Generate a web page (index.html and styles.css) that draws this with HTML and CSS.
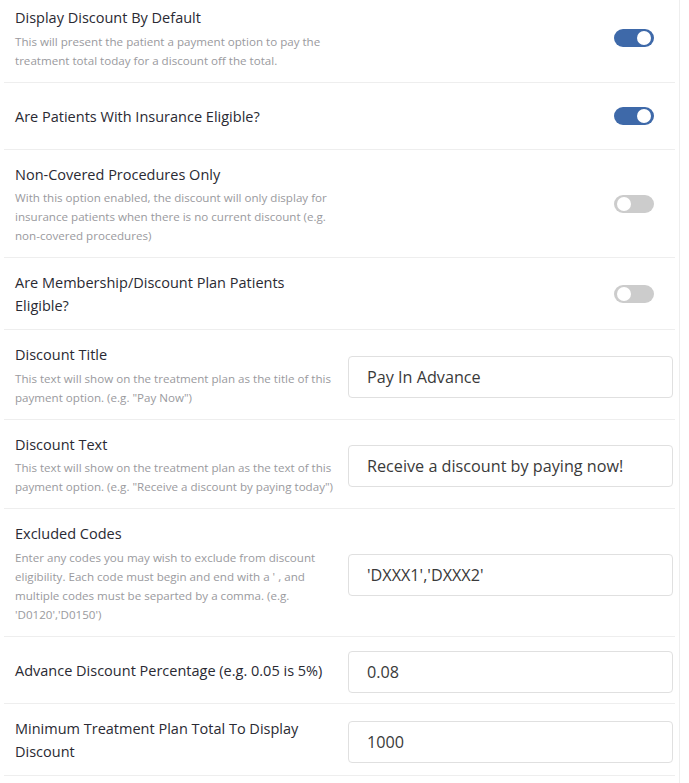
FILE: index.html
```html
<!DOCTYPE html>
<html>
<head>
<meta charset="utf-8">
<link rel="stylesheet" href="styles.css">
</head>
<body>
<div class="page">
  <div class="list">
    <div class="row">
      <div class="label">
        <div class="title">Display Discount By Default</div>
        <div class="desc">This will present the patient a payment option to pay the<br>treatment total today for a discount off the total.</div>
      </div>
      <span class="toggle on"><span class="knob"></span></span>
    </div>
    <div class="row">
      <div class="label">
        <div class="title">Are Patients With Insurance Eligible?</div>
      </div>
      <span class="toggle on"><span class="knob"></span></span>
    </div>
    <div class="row">
      <div class="label">
        <div class="title">Non-Covered Procedures Only</div>
        <div class="desc">With this option enabled, the discount will only display for<br>insurance patients when there is no current discount (e.g.<br>non-covered procedures)</div>
      </div>
      <span class="toggle"><span class="knob"></span></span>
    </div>
    <div class="row">
      <div class="label">
        <div class="title">Are Membership/Discount Plan Patients<br>Eligible?</div>
      </div>
      <span class="toggle"><span class="knob"></span></span>
    </div>
    <div class="row">
      <div class="label">
        <div class="title">Discount Title</div>
        <div class="desc">This text will show on the treatment plan as the title of this<br>payment option. (e.g. "Pay Now")</div>
      </div>
      <div class="field">Pay In Advance</div>
    </div>
    <div class="row">
      <div class="label">
        <div class="title">Discount Text</div>
        <div class="desc">This text will show on the treatment plan as the text of this<br>payment option. (e.g. "Receive a discount by paying today")</div>
      </div>
      <div class="field">Receive a discount by paying now!</div>
    </div>
    <div class="row">
      <div class="label">
        <div class="title">Excluded Codes</div>
        <div class="desc">Enter any codes you may wish to exclude from discount<br>eligibility. Each code must begin and end with a ' , and<br>multiple codes must be separted by a comma. (e.g.<br>'D0120','D0150')</div>
      </div>
      <div class="field">'DXXX1','DXXX2'</div>
    </div>
    <div class="row">
      <div class="label">
        <div class="title">Advance Discount Percentage (e.g. 0.05 is 5%)</div>
      </div>
      <div class="field">0.08</div>
    </div>
    <div class="row">
      <div class="label">
        <div class="title">Minimum Treatment Plan Total To Display<br>Discount</div>
      </div>
      <div class="field">1000</div>
    </div>
  </div>
</div>
</body>
</html>
```

FILE: styles.css
```css
html, body {
  margin: 0;
  padding: 0;
  background: #fff;
}
body {
  font-family: "Open Sans", "Noto Sans", sans-serif;
  color: #333;
}
.page {
  width: 679px;
  min-height: 783px;
  border-right: 1px solid #eeeeee;
}
.list {
  margin: 0 4px;
}
.row {
  display: flex;
  align-items: center;
  box-sizing: border-box;
  min-height: 67px;
  padding: 13px 0 12px 11px;
  border-bottom: 1px solid #eeeeee;
}
.row:first-child {
  padding-top: 6px;
}
.label {
  flex: 1 1 auto;
  min-width: 0;
}
.title {
  font-size: 14.5px;
  line-height: 23px;
  color: #2a2a33;
}
.desc {
  margin-top: 2.5px;
  font-size: 11.6px;
  line-height: 19px;
  color: #9a9a9e;
}
.toggle {
  flex: 0 0 auto;
  position: relative;
  width: 40px;
  height: 18px;
  border-radius: 9px;
  background: #cccccc;
  margin-right: 21px;
}
.toggle.on {
  background: #3e69a9;
}
.knob {
  position: absolute;
  top: 2px;
  left: 3px;
  width: 14px;
  height: 14px;
  border-radius: 50%;
  background: #fff;
}
.toggle.on .knob {
  left: auto;
  right: 3px;
}
.field {
  flex: 0 0 auto;
  box-sizing: border-box;
  width: 325px;
  height: 42px;
  margin: 1px 2px -3px 14px;
  padding: 0 18px;
  border: 1px solid #e0e0e0;
  border-radius: 4px;
  font-size: 16.2px;
  line-height: 40px;
  color: #3a3a3a;
}
```
